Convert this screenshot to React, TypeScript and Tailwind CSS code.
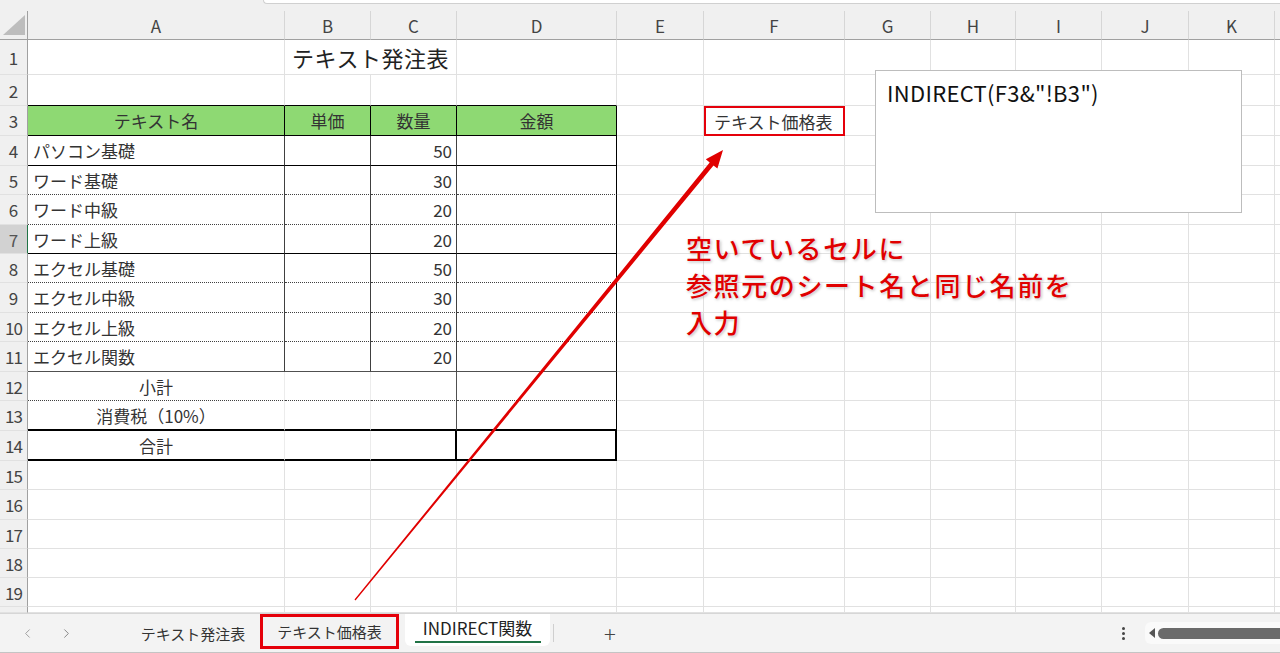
import { ChevronLeft, ChevronRight } from 'lucide-react';

type Col = { key: string; w: string };

const cols: Col[] = [
  { key: 'A', w: 'w-[257px]' },
  { key: 'B', w: 'w-[86px]' },
  { key: 'C', w: 'w-[86px]' },
  { key: 'D', w: 'w-[160px]' },
  { key: 'E', w: 'w-[87px]' },
  { key: 'F', w: 'w-[141px]' },
  { key: 'G', w: 'w-[86px]' },
  { key: 'H', w: 'w-[85px]' },
  { key: 'I', w: 'w-[86px]' },
  { key: 'J', w: 'w-[87px]' },
  { key: 'K', w: 'w-[86px]' },
  { key: '', w: 'w-[20px]' },
];

// row heights picked so the lines land where Excel drew them
const rowH: Record<number, string> = {
  1: 'h-[35px]', 2: 'h-[31px]', 3: 'h-[30px]', 4: 'h-[30px]', 5: 'h-[29px]',
  6: 'h-[30px]', 7: 'h-[29px]', 8: 'h-[29px]', 9: 'h-[30px]', 10: 'h-[29px]',
  11: 'h-[30px]', 12: 'h-[29px]', 13: 'h-[30px]', 14: 'h-[30px]', 15: 'h-[29px]',
  16: 'h-[30px]', 17: 'h-[29px]', 18: 'h-[29px]', 19: 'h-[29px]', 20: 'h-[6px]',
};

const items: [string, number][] = [
  ['パソコン基礎', 50],
  ['ワード基礎', 30],
  ['ワード中級', 20],
  ['ワード上級', 20],
  ['エクセル基礎', 50],
  ['エクセル中級', 30],
  ['エクセル上級', 20],
  ['エクセル関数', 20],
];

const headers = ['テキスト名', '単価', '数量', '金額'];
const footer: Record<number, string> = { 12: '小計', 13: '消費税（10%）', 14: '合計' };

function rightBorder(r: number, c: number) {
  if (c <= 3 && r >= 3 && r <= 14) {
    if (c === 3) return r === 14 ? 'border-r-2 border-r-black' : 'border-r border-r-black';
    if (r === 3) return 'border-r border-r-black';
    if (r <= 11) return 'border-r border-r-[#404040]';
    if (c === 2) return r === 14 ? 'border-r-2 border-r-black' : 'border-r border-r-[#505050]';
    return 'border-r border-r-[#ececec]';
  }
  return 'border-r border-r-[#e1e1e1]';
}

function bottomBorder(r: number, c: number) {
  if (c <= 3) {
    if (r === 2 || r === 3 || r === 4 || r === 7) return 'border-b border-b-black';
    if (r === 11) return 'border-b border-b-[#505050]';
    if (r === 5 || r === 6 || r === 8 || r === 9 || r === 10 || r === 12)
      return 'border-b border-b-[#404040] [border-bottom-style:dotted]';
    if (r === 13 || r === 14) return 'border-b-2 border-b-black';
  }
  return 'border-b border-b-[#e1e1e1]';
}

function CellText({ r, c }: { r: number; c: number }) {
  if (r === 3 && c <= 3) return <span className="w-full text-center">{headers[c]}</span>;
  if (r >= 4 && r <= 11) {
    const [name, qty] = items[r - 4];
    if (c === 0) return <span className="pl-[5px]">{name}</span>;
    if (c === 2) return <span className="w-full text-right pr-[4px]">{qty}</span>;
  }
  if (footer[r] && c === 0) return <span className="w-full text-center">{footer[r]}</span>;
  if (r === 3 && c === 5) return <span className="pl-[8px]">テキスト価格表</span>;
  return null;
}

function Row({ r }: { r: number }) {
  const selected = r === 7;
  return (
    <div className={`flex ${rowH[r]}`}>
      <div
        className={`w-[28px] shrink-0 flex items-center justify-center text-[17px] border-b border-b-[#e1e1e1] border-r ${
          selected ? 'bg-[#d2d2d2] text-[#555] border-r-[#217346]' : 'bg-[#f0f0f0] text-[#444] border-r-[#a0a0a0]'
        } ${r >= 10 ? 'tracking-[-1px]' : ''}`}
      >
        {r < 20 ? r : ''}
      </div>
      {cols.map((col, c) => {
        if (r === 1 && c === 2) return null;
        if (r === 1 && c === 1) {
          return (
            <div
              key={c}
              className="w-[172px] shrink-0 flex items-center justify-center bg-white border-r border-r-[#e1e1e1] border-b border-b-[#e1e1e1] text-[22px] text-[#222] tracking-[0.5px]"
            >
              テキスト発注表
            </div>
          );
        }
        const red = r === 3 && c === 5;
        const green = r === 3 && c <= 3;
        return (
          <div
            key={c}
            className={`${col.w} shrink-0 flex items-center overflow-hidden whitespace-nowrap text-[17px] text-[#333] ${
              green ? 'bg-[#8ed973]' : 'bg-white'
            } ${red ? 'border-2 border-[#e5000a]' : `${rightBorder(r, c)} ${bottomBorder(r, c)}`}`}
          >
            <CellText r={r} c={c} />
          </div>
        );
      })}
    </div>
  );
}

function SheetTabs() {
  return (
    <div className="h-[40px] flex items-center bg-[#f3f3f3] border-t border-t-[#d6d6d6] border-b border-b-[#c4c4c4] text-[15px] text-[#333] whitespace-nowrap">
      <ChevronLeft className="ml-[20px] w-[15px] h-[15px] text-[#9a9a9a]" strokeWidth={1.5} />
      <ChevronRight className="ml-[24px] w-[15px] h-[15px] text-[#808080]" strokeWidth={1.5} />
      <div className="ml-[54px] w-[130px] text-center">テキスト発注表</div>
      <div className="ml-[2px] w-[139px] h-[35px] -mt-[3px] border-[3px] border-[#e5000a] flex items-center justify-center">
        テキスト価格表
      </div>
      <div className="ml-[6px] w-[145px] h-[32px] self-start bg-white rounded-b-[6px] flex flex-col items-center justify-center text-[#222]">
        <span className="text-[17px] leading-[20px]">INDIRECT関数</span>
        <span className="mt-[3px] w-[126px] h-[2px] bg-[#217346]" />
      </div>
      <div className="ml-[3px] w-px h-[18px] bg-[#cfcfcf]" />
      <div className="ml-[50px] text-[22px] text-[#444] leading-none font-light">+</div>
      <div className="flex-1" />
      <div className="flex flex-col gap-[2px] items-center mr-[20px]">
        <span className="w-[3px] h-[3px] rounded-full bg-[#444]" />
        <span className="w-[3px] h-[3px] rounded-full bg-[#444]" />
        <span className="w-[3px] h-[3px] rounded-full bg-[#444]" />
      </div>
      <div className="w-[135px] h-[22px] bg-[#fafafa] rounded-l-[6px] flex items-center pl-[4px] gap-[3px]">
        <svg width="6" height="10" viewBox="0 0 6 10">
          <polygon points="6,0 6,10 0,5" fill="#555" />
        </svg>
        <div className="flex-1 h-[11px] bg-[#6b6b6b] rounded-l-full" />
      </div>
    </div>
  );
}

export default function App() {
  const rows = Array.from({ length: 20 }, (_, i) => i + 1);
  return (
    <div className="relative w-[1280px] h-[653px] overflow-hidden bg-[#f0f0f0] font-['Noto_Sans_CJK_JP','Noto_Sans',sans-serif] leading-none">
      {/* window strip above the column letters */}
      <div className="h-[11px] flex">
        <div className="w-[263px] shrink-0" />
        <div className="flex-1 h-[4px] bg-white border-l border-b border-[#d0d0d0] rounded-bl-[6px]" />
      </div>

      {/* column header band */}
      <div className="flex h-[29px]">
        <div className="w-[28px] shrink-0 border-r border-r-[#a0a0a0] border-b border-b-[#a0a0a0]">
          <svg width="27" height="28" viewBox="0 0 27 28">
            <polygon points="3,24 25,24 25,4" fill="#bdbdbd" />
          </svg>
        </div>
        {cols.map((col) => (
          <div
            key={col.key}
            className={`${col.w} shrink-0 flex items-center justify-center text-[17px] text-[#444] border-r border-r-[#d6d6d6] border-b border-b-[#a0a0a0]`}
          >
            {col.key}
          </div>
        ))}
      </div>

      {rows.map((r) => (
        <Row key={r} r={r} />
      ))}

      <SheetTabs />

      {/* text box with the formula */}
      <div className="absolute left-[875px] top-[70px] w-[367px] h-[143px] bg-white border border-[#bdbdbd] pl-[11px] pt-[6px] text-[22px] leading-[30px] text-[#111] tracking-[0.3px]">
        INDIRECT(F3&amp;"!B3")
      </div>

      {/* callout */}
      <div className="absolute left-[686px] top-[229px] text-[26px] leading-[37px] font-medium text-[#e00000] tracking-[1.6px] whitespace-nowrap [text-shadow:0_0_3px_#fff,1px_1px_3px_rgba(0,0,0,0.35)]">
        <div>空いているセルに</div>
        <div>参照元のシート名と同じ名前を</div>
        <div>入力</div>
      </div>

      {/* arrow from the sheet tab to F3 */}
      <svg className="absolute inset-0 pointer-events-none" width="1280" height="653" viewBox="0 0 1280 653">
        <polygon
          points="723,150 717.4,168.6 713.5,165.4 355.5,600.4 354.5,599.6 709.7,162.4 705.8,159.2"
          fill="#e00000"
        />
      </svg>
    </div>
  );
}
